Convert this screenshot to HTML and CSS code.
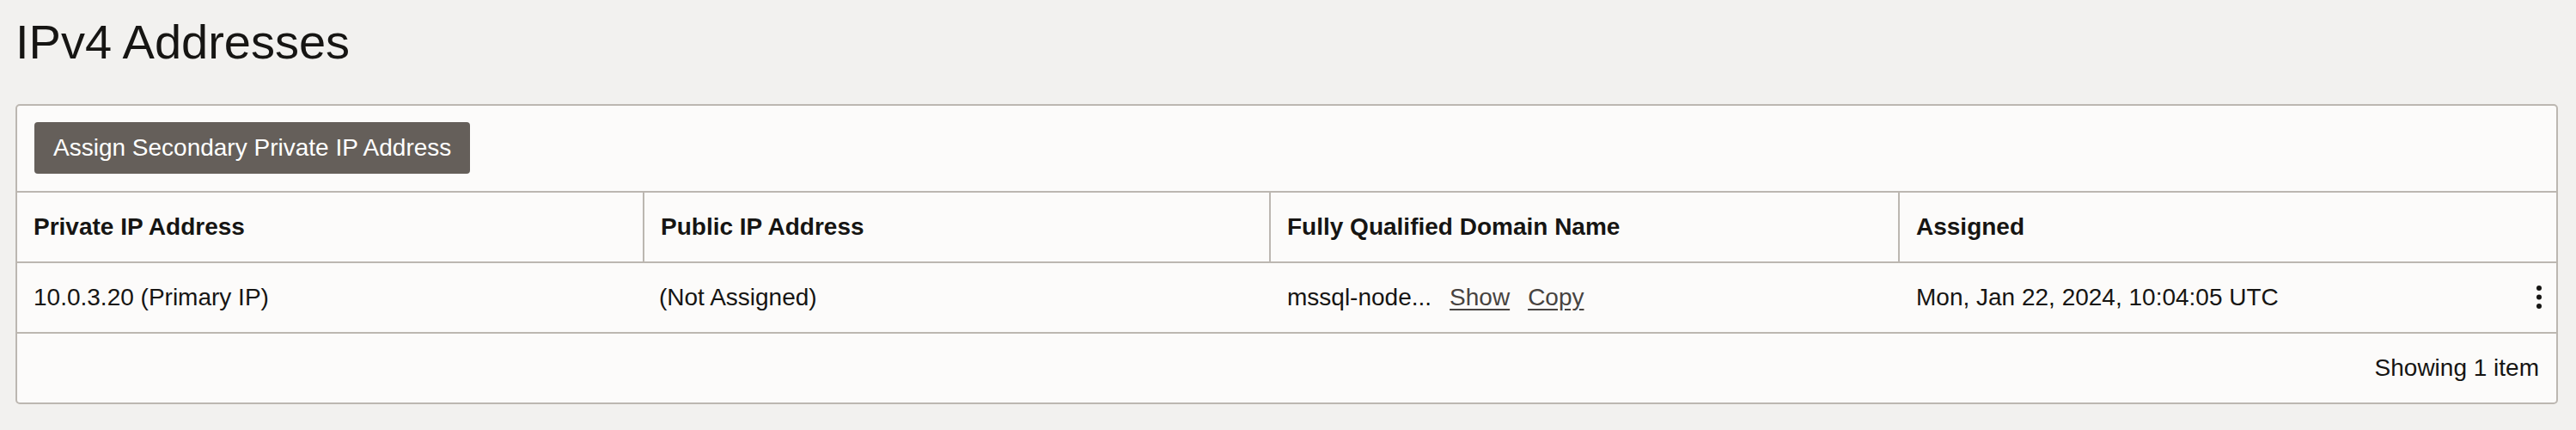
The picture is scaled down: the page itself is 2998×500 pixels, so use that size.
FILE: index.html
```html
<!DOCTYPE html>
<html lang="en">
<head>
<meta charset="utf-8">
<title>IPv4 Addresses</title>
<link rel="stylesheet" href="styles.css">
</head>
<body>
<div class="page">
  <h1 class="title">IPv4 Addresses</h1>
  <section class="panel">
    <div class="toolbar">
      <button class="btn" type="button">Assign Secondary Private IP Address</button>
    </div>
    <div class="table">
      <div class="row row-head">
        <div class="cell th">Private IP Address</div>
        <div class="cell th sep">Public IP Address</div>
        <div class="cell th sep">Fully Qualified Domain Name</div>
        <div class="cell th sep">Assigned</div>
      </div>
      <div class="row row-body">
        <div class="cell td">10.0.3.20 (Primary IP)</div>
        <div class="cell td">(Not Assigned)</div>
        <div class="cell td fqdn">
          <span>mssql-node...</span>
          <a class="link" href="#">Show</a>
          <a class="link" href="#">Copy</a>
        </div>
        <div class="cell td assigned">
          <span>Mon, Jan 22, 2024, 10:04:05 UTC</span>
          <svg class="kebab" width="6" height="28" viewBox="0 0 6 28" aria-label="Actions">
            <circle cx="3" cy="3" r="3"/>
            <circle cx="3" cy="13.5" r="3"/>
            <circle cx="3" cy="24" r="3"/>
          </svg>
        </div>
      </div>
    </div>
    <div class="footer">Showing 1 item</div>
  </section>
</div>
</body>
</html>
```

FILE: styles.css
```css
html, body {
  margin: 0;
  padding: 0;
  background: #f2f1ef;
}

body {
  font-family: "Liberation Sans", Arial, Helvetica, sans-serif;
  color: #161513;
  font-size: 28px;
}

.page {
  padding: 17px 21px 0 18px;
}

.title {
  margin: 0 0 40px 0;
  font-size: 56px;
  line-height: 64px;
  font-weight: 400;
  color: #161513;
}

.panel {
  background: #fcfbfa;
  border: 2px solid #bcb7b1;
  border-radius: 5px;
}

.toolbar {
  padding: 19px 20px 20px 20px;
  border-bottom: 2px solid #bcb7b1;
}

.btn {
  display: block;
  height: 60px;
  padding: 0 22px;
  border: none;
  border-radius: 4px;
  background: #655f5a;
  color: #ffffff;
  font-family: "Liberation Sans", Arial, Helvetica, sans-serif;
  font-size: 28px;
  line-height: 60px;
}

.row {
  display: grid;
  grid-template-columns: 728px 729px 732px 1fr;
  height: 82px;
  box-sizing: border-box;
  border-bottom: 2px solid #bcb7b1;
}

.cell {
  display: flex;
  align-items: center;
  box-sizing: border-box;
  padding: 0 19px;
  white-space: nowrap;
}

.th {
  font-weight: 700;
}

.sep {
  border-left: 2px solid #bcb7b1;
}

.td {
  font-weight: 400;
}

.fqdn {
  gap: 21px;
  padding-left: 21px;
}

.link {
  color: #474340;
  text-decoration: underline;
  text-underline-offset: 4px;
}

.assigned {
  justify-content: space-between;
  padding-left: 21px;
  padding-right: 17px;
}

.kebab {
  fill: #161513;
  display: block;
}

.footer {
  display: flex;
  align-items: center;
  justify-content: flex-end;
  height: 80px;
  padding: 0 20px;
}
```
